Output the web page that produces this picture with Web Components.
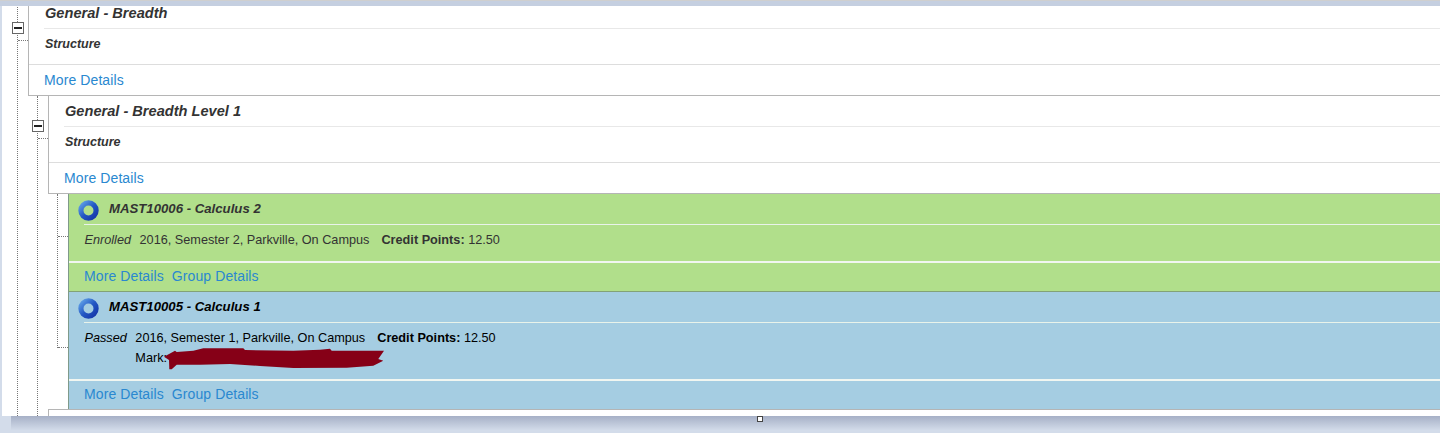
<!DOCTYPE html>
<html>
<head>
<meta charset="utf-8">
<title>Course plan</title>
<style>
  html, body { margin: 0; height: 433px; overflow: hidden; background: #d3dcea; }
  body { font-family: "Liberation Sans", Arial, sans-serif; font-size: 14px; color: #333; }
</style>
</head>
<body>
<plan-frame>
  <tree-branch connector="42">
    <tree-toggle slot="toggle" style="--toggle-top: 24px"></tree-toggle>
    <plan-card title="General - Breadth" kind="Structure"></plan-card>
    <tree-branch indent connector="42">
      <tree-toggle slot="toggle" style="--toggle-top: 24px"></tree-toggle>
      <plan-card title="General - Breadth Level 1" kind="Structure"></plan-card>
      <tree-branch indent connector="42" second="153" short>
        <subject-card tone="green" title="MAST10006 - Calculus 2" status="Enrolled" session="2016, Semester 2, Parkville, On Campus" points="12.50"></subject-card>
        <subject-card tone="blue" title="MAST10005 - Calculus 1" status="Passed" session="2016, Semester 1, Parkville, On Campus" points="12.50" marked></subject-card>
      </tree-branch>
      <plan-card class="last"></plan-card>
    </tree-branch>
  </tree-branch>
</plan-frame>

<script>
// outer window: top strip, white scrolled panel, shadow and resize handle
class PlanFrame extends HTMLElement {
  constructor() {
    super();
    this.attachShadow({mode: 'open'});
    this.shadowRoot.innerHTML = `<style>
      :host { display: block; height: 433px; position: relative; overflow: hidden; }
      .strip { height: 6px; box-sizing: border-box; background: #c5cfe0; border-top: 1px solid #cfcfcf; }
      .panel { height: 410px; margin-left: 2px; background: #fff; overflow: hidden; }
      .scroll { margin-top: -8px; padding-left: 15px; }
      .shadow { height: 17px; margin-left: 11px; background: linear-gradient(#a6b0c6, #d3dcea 85%); }
      .grip { position: absolute; left: 757px; top: 416px; width: 4px; height: 4px; border: 1px solid #444; background: #fff; }
    </style>
    <div class="strip"></div>
    <div class="panel"><div class="scroll"><slot></slot></div></div>
    <div class="shadow"></div>
    <div class="grip"></div>`;
  }
}
customElements.define('plan-frame', PlanFrame);

// one level of the tree: dotted line on the left, content to its right
class TreeBranch extends HTMLElement {
  constructor() {
    super();
    this.attachShadow({mode: 'open'});
  }
  connectedCallback() {
    var connector = this.getAttribute('connector');
    var second = this.getAttribute('second');
    var tick = 'position:absolute;left:1px;width:10px;border-top:1px dotted #777;';
    this.shadowRoot.innerHTML = `<style>
      :host { display: block; position: relative; }
      :host([indent]) { margin-left: 9px; }
      .line { position: absolute; left: 0; top: 0; bottom: 0; border-left: 1px dotted #777; }
      :host([short]) .line { bottom: auto; height: 154px; }
      .body { padding-left: 11px; }
    </style>
    <div class="line"></div>
    <div style="${tick}top:${connector}px"></div>
    ${second ? `<div style="${tick}top:${second}px"></div>` : ''}
    <slot name="toggle"></slot>
    <div class="body"><slot></slot></div>`;
  }
}
customElements.define('tree-branch', TreeBranch);

// the small minus box sitting on a tree line
class TreeToggle extends HTMLElement {
  constructor() {
    super();
    this.attachShadow({mode: 'open'});
    this.shadowRoot.innerHTML = `<style>
      :host { display: block; position: absolute; left: -5px; top: var(--toggle-top); width: 10px; height: 10px;
              background: #fff; border: 1px solid #666; }
      i { display: block; margin: 4px 1px 0; height: 2px; background: #222; }
    </style><i></i>`;
  }
}
customElements.define('tree-toggle', TreeToggle);

// white structure card
class PlanCard extends HTMLElement {
  constructor() {
    super();
    this.attachShadow({mode: 'open'});
  }
  connectedCallback() {
    var title = this.getAttribute('title');
    this.removeAttribute('title');
    this.shadowRoot.innerHTML = `<style>
      :host { display: block; background: #fff; border-left: 1px solid #b5b5b5; border-bottom: 1px solid #b5b5b5; }
      :host(.last) { height: 40px; border-top: 1px solid #b5b5b5; border-bottom: 0; }
      .head { margin-left: 15px; padding-left: 1px; height: 30px; border-bottom: 1px solid #e8e8e8;
              font: italic bold 14.6px/30px "Liberation Sans", Arial, sans-serif; color: #333; }
      .kind { height: 35px; margin-left: 16px; font: italic bold 12.5px/30px "Liberation Sans", Arial, sans-serif; color: #333; }
      .foot { height: 30px; line-height: 31px; padding-left: 15px; border-top: 1px solid #ddd; color: #2a88d0; letter-spacing: .1px; }
    </style>` + (title ? `
    <div class="head">${title}</div>
    <div class="kind">${this.getAttribute('kind')}</div>
    <div class="foot">More Details</div>` : '');
  }
}
customElements.define('plan-card', PlanCard);

// coloured subject card, green while enrolled and blue once passed
class SubjectCard extends HTMLElement {
  constructor() {
    super();
    this.attachShadow({mode: 'open'});
  }
  connectedCallback() {
    var title = this.getAttribute('title');
    this.removeAttribute('title');
    var marked = this.hasAttribute('marked');
    this.shadowRoot.innerHTML = `<style>
      :host { display: block; position: relative; border-left: 1px solid #7f9a8a; font-size: 12.7px; }
      :host([tone=green]) { background: #b1df8b; color: #333; border-bottom: 1px solid #82a277; }
      :host([tone=blue]) { background: #a5cde2; color: #000; }
      svg { position: absolute; left: 9px; top: 6px; }
      .head { margin-left: 15px; height: 30px; border-bottom: 1px solid #e9f3ea;
              font: italic bold 13.2px/29px "Liberation Sans", Arial, sans-serif; padding-left: 25px; }
      .info { display: flex; padding-left: 15.5px; height: 36px; line-height: 30px; }
      :host([marked]) .info { height: 56px; }
      .status { font-style: italic; margin-right: 8.5px; }
      .mark { line-height: 20px; margin-top: -5px; }
      .pts { margin-left: 12px; }
      .foot { height: 28px; line-height: 27px; padding-left: 15px; border-top: 2px solid #f1f6f1; color: #2a88d0; font-size: 14px; letter-spacing: .1px; }
      .foot span + span { margin-left: 8px; }
    </style>
    <svg width="21" height="21" viewBox="0 0 21 21">
      <defs><linearGradient id="g" x1="0" y1="0" x2="1" y2="1">
        <stop offset="0" stop-color="#5f9fe6"/><stop offset=".5" stop-color="#2458c4"/><stop offset="1" stop-color="#1636a8"/>
      </linearGradient></defs>
      <circle cx="10.5" cy="10.5" r="7.6" fill="none" stroke="url(#g)" stroke-width="5.2"/>
    </svg>
    <div class="head">${title}</div>
    <div class="info">
      <span class="status">${this.getAttribute('status')}</span>
      <div>
        <span>${this.getAttribute('session')}</span><span class="pts"><b>Credit Points:</b> ${this.getAttribute('points')}</span>
        ${marked ? '<div class="mark">Mark:</div>' : ''}
      </div>
    </div>
    <div class="foot"><span>More Details</span><span>Group Details</span></div>
    ${marked ? `<svg style="left:91px;top:52px" width="235" height="32" viewBox="0 0 235 32">
      <path d="M4 12.7 L15 6.7 L16.7 8 L33.3 6.7 L43.3 4.3 L83.3 4.3 L85 6 L133.3 6.7 L160 5.7 L170 4.7 L171.7 6.7 L224 6.7 L218.3 15 L223.3 16.7 L213.3 21.7 L186.7 23.7 L133.3 24 L100 22 L70 20 L40 20.7 L16.7 20.7 L11.7 25.3 L9.3 25.3 L9 16 Z" fill="#860017"/>
    </svg>` : ''}`;
  }
}
customElements.define('subject-card', SubjectCard);
</script>
</body>
</html>
